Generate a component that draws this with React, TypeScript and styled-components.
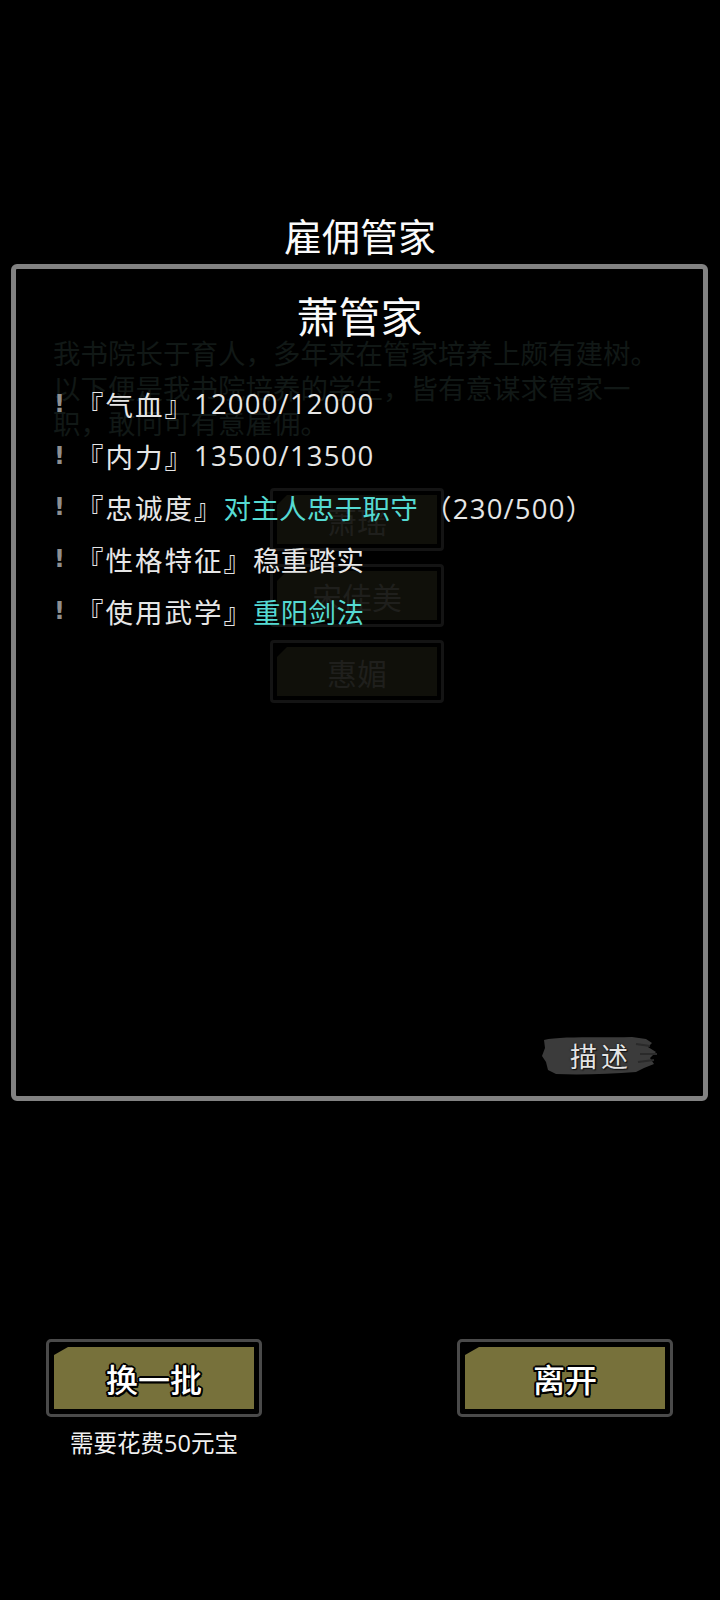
import styled, { createGlobalStyle } from "styled-components";

const Global = createGlobalStyle`
  html, body {
    margin: 0;
    padding: 0;
    background: #000;
  }
  body {
    font-family: "Noto Sans CJK SC", "Noto Sans", sans-serif;
    color: #e8e8e8;
  }
`;

const Page = styled.div`
  width: 720px;
  height: 1600px;
  display: flex;
  flex-direction: column;
  background: #000;
  overflow: hidden;
`;

const Title = styled.h1`
  margin: 211px 0 0 0;
  text-align: center;
  font-size: 38px;
  line-height: 48px;
  font-weight: 400;
  color: #fafafa;
`;

const Panel = styled.div`
  margin: 5px 12px 0 11px;
  height: 837px;
  box-sizing: border-box;
  border: 5px solid #828282;
  border-radius: 6px;
  display: flex;
  flex-direction: column;
`;

const Name = styled.div`
  margin-top: 25px;
  text-align: center;
  font-size: 42px;
  line-height: 42px;
  color: #fafafa;
`;

const Stack = styled.div`
  flex: 1;
  display: grid;
`;

const Layer = styled.div<{ $front?: boolean }>`
  grid-area: 1 / 1;
  display: flex;
  flex-direction: column;
  position: relative;
  z-index: ${(p) => (p.$front ? 2 : 1)};
`;

const GhostText = styled.p`
  margin: -1px 0 0 37px;
  width: 620px;
  font-size: 27.5px;
  line-height: 35px;
  color: #111816;
`;

const GhostList = styled.div`
  margin-top: 48px;
  display: flex;
  flex-direction: column;
  align-items: center;
  gap: 13px;
  padding-right: 5px;
`;

const GhostButton = styled.div`
  width: 174px;
  height: 63px;
  box-sizing: border-box;
  border: 3px solid #141414;
  border-radius: 4px;
  padding: 4px;
  display: flex;
`;

const GhostFill = styled.div`
  flex: 1;
  background: #10100a;
  clip-path: polygon(10px 0, 100% 0, 100% 100%, 0 100%, 0 10px);
  display: flex;
  align-items: center;
  justify-content: center;
  font-size: 30px;
  color: #1f1f1c;
`;

const Rows = styled.div`
  padding: 42px 0 0 38px;
  display: flex;
  flex-direction: column;
`;

const Row = styled.div`
  display: flex;
  align-items: center;
  height: 51.7px;
  font-family: "Open Sans", "Noto Sans CJK SC", sans-serif;
  font-size: 27.5px;
  white-space: nowrap;
`;

const Bang = styled.span`
  width: 22px;
  font-family: "DejaVu Sans", sans-serif;
  font-weight: 700;
  font-size: 24px;
  color: #8f8f8f;
`;

const Label = styled.span<{ $accent?: boolean; $spacing?: number; $gap?: number }>`
  color: ${(p) => (p.$accent ? "#55dad2" : "#e6e6e6")};
  letter-spacing: ${(p) => p.$spacing ?? 0}px;
  margin-left: ${(p) => p.$gap ?? 0}px;
`;

const Footer = styled.div`
  display: flex;
  justify-content: flex-end;
  padding: 0 45px 20px 0;
`;

const Brush = styled.div`
  position: relative;
  width: 118px;
  height: 42px;
  display: flex;
  align-items: center;
  justify-content: center;
`;

const BrushShape = styled.svg`
  position: absolute;
  inset: 0;
  width: 100%;
  height: 100%;
`;

const BrushText = styled.span`
  position: relative;
  font-family: "Noto Sans CJK SC", sans-serif;
  font-size: 27px;
  letter-spacing: 4px;
  color: #e4e4e4;
  text-shadow: 0 0 2px #111, 1px 1px 1px #111;
  margin-left: 4px;
`;

const Actions = styled.div`
  margin-top: 238px;
  padding: 0 47px 0 46px;
  display: flex;
  justify-content: space-between;
  align-items: flex-start;
`;

const ActionColumn = styled.div`
  display: flex;
  flex-direction: column;
  align-items: center;
`;

const ActionButton = styled.div`
  width: 216px;
  height: 78px;
  box-sizing: border-box;
  border: 3px solid #4a4a4a;
  border-radius: 5px;
  padding: 5px;
  display: flex;
  background: #000;
`;

const ActionFill = styled.div`
  flex: 1;
  background: #77713b;
  clip-path: polygon(14px 0, 100% 0, 100% 100%, 0 100%, 0 8px);
  display: flex;
  align-items: center;
  justify-content: center;
  font-size: 32px;
  font-weight: 500;
  color: #fff;
  text-shadow:
    2px 0 0 #000, -2px 0 0 #000, 0 2px 0 #000, 0 -2px 0 #000,
    1.5px 1.5px 0 #000, -1.5px -1.5px 0 #000, 1.5px -1.5px 0 #000, -1.5px 1.5px 0 #000;
`;

const Cost = styled.div`
  margin-top: 11px;
  font-family: "Open Sans", "Noto Sans CJK SC", sans-serif;
  font-size: 23.5px;
  line-height: 30px;
  color: #f0f0f0;
`;

type Stat = { label: string; value: string; accent?: boolean; numeric?: boolean; extra?: string };

const stats: Stat[] = [
  { label: "『气血』", value: "12000/12000", numeric: true },
  { label: "『内力』", value: "13500/13500", numeric: true },
  { label: "『忠诚度』", value: "对主人忠于职守", accent: true, extra: "（230/500）" },
  { label: "『性格特征』", value: "稳重踏实" },
  { label: "『使用武学』", value: "重阳剑法", accent: true },
];

export default function App() {
  return (
    <Page>
      <Global />
      <Title>雇佣管家</Title>
      <Panel>
        <Name>萧管家</Name>
        <Stack>
          <Layer>
            <GhostText>
              我书院长于育人，多年来在管家培养上颇有建树。以下便是我书院培养的学生，皆有意谋求管家一职，敢问可有意雇佣。
            </GhostText>
            <GhostList>
              {["萧瑶", "宋佳美", "惠媚"].map((n) => (
                <GhostButton key={n}>
                  <GhostFill>{n}</GhostFill>
                </GhostButton>
              ))}
            </GhostList>
          </Layer>
          <Layer $front>
            <Rows>
              {stats.map((s) => (
                <Row key={s.label}>
                  <Bang>!</Bang>
                  <Label $spacing={2}>{s.label}</Label>
                  <Label $accent={s.accent} $spacing={s.numeric ? 1.2 : 0.3}>
                    {s.value}
                  </Label>
                  {s.extra && (
                    <Label $spacing={1.2} $gap={6}>
                      {s.extra}
                    </Label>
                  )}
                </Row>
              ))}
            </Rows>
          </Layer>
        </Stack>
        <Footer>
          <Brush>
            <BrushShape viewBox="0 0 118 42" preserveAspectRatio="none">
              <path
                d="M4 6 C20 2 60 4 92 3 L106 5 L112 9 L108 13 L116 18 L110 24 L114 30 L104 34 L96 38 C70 40 40 41 16 40 L8 36 L6 28 L2 22 L5 14 Z"
                fill="#3b3b3b"
              />
              <path d="M96 10 L110 12 M98 28 L114 26 M100 20 L117 20" stroke="#2a2a2a" strokeWidth="2" />
            </BrushShape>
            <BrushText>描述</BrushText>
          </Brush>
        </Footer>
      </Panel>
      <Actions>
        <ActionColumn>
          <ActionButton>
            <ActionFill>换一批</ActionFill>
          </ActionButton>
          <Cost>需要花费50元宝</Cost>
        </ActionColumn>
        <ActionColumn>
          <ActionButton>
            <ActionFill>离开</ActionFill>
          </ActionButton>
        </ActionColumn>
      </Actions>
    </Page>
  );
}
